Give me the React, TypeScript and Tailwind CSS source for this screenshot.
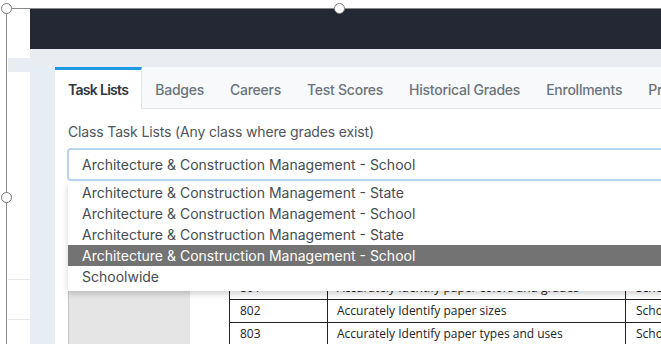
const tabs = ["Badges", "Careers", "Test Scores", "Historical Grades", "Enrollments", "Progress"];

const options = [
  "Architecture & Construction Management - State",
  "Architecture & Construction Management - School",
  "Architecture & Construction Management - State",
  "Architecture & Construction Management - School",
  "Schoolwide",
];

const rows = [
  { code: "800", name: "Accurately Identify paper weights", scope: "School" },
  { code: "801", name: "Accurately Identify paper finishes", scope: "School" },
  { code: "801", name: "Accurately Identify paper colors and grades", scope: "School" },
  { code: "802", name: "Accurately Identify paper sizes", scope: "School" },
  { code: "803", name: "Accurately Identify paper types and uses", scope: "School" },
];

function Handle({ className }: { className: string }) {
  return (
    <div
      className={`absolute w-[11px] h-[11px] rounded-full border border-[#7a7a7a] bg-white ${className}`}
    />
  );
}

export default function App() {
  return (
    <div
      className="relative w-[661px] h-[344px] overflow-hidden bg-white flex pt-[8px] pl-[8px]"
      style={{ fontFamily: "Inter, 'Noto Sans', sans-serif" }}
    >
      {/* left strip of the page behind */}
      <div className="w-[22px] flex flex-col shrink-0">
        <div className="h-[50px] bg-white" />
        <div className="h-[14px] bg-[#e9ecf1]" />
        <div className="h-[208px] bg-white border-b border-[#e3e6ea]" />
        <div className="h-[40px] bg-white border-b border-[#e3e6ea]" />
        <div className="flex-1 bg-white" />
      </div>

      <div className="flex-1 flex flex-col min-w-0">
        <div className="h-[41px] bg-[#232834] shrink-0" />
        <div className="flex-1 flex bg-[#e9ecf1] pt-[18px]">
          <div className="w-[25px] bg-[#e7edf5] shrink-0" />
          <div className="flex-1 bg-white flex flex-col min-w-0">
            {/* tabs */}
            <div className="h-[42px] flex items-stretch bg-[#f8f9fa] border-b border-[#e2e5e9] shrink-0">
              <div className="bg-white border-t-[3px] border-[#1d9be6] border-r border-r-[#e2e5e9] px-[13px] flex items-center text-[14px] font-semibold tracking-[-0.7px] text-[#2f353c] whitespace-nowrap -mb-px">
                Task Lists
              </div>
              {tabs.map((t) => (
                <div
                  key={t}
                  className="px-[13px] flex items-center pt-[3px] text-[14px] font-medium tracking-[-0.25px] text-[#6b737c] whitespace-nowrap"
                >
                  {t}
                </div>
              ))}
            </div>

            {/* body */}
            <div className="relative pl-[13px] pt-[12px]">
              <div className="h-[20px] flex items-center text-[14px] tracking-[-0.15px] text-[#50555b] whitespace-nowrap">
                Class Task Lists (Any class where grades exist)
              </div>
              <div className="mt-[7px] -ml-px w-[640px] h-[33px] border-2 border-[#b9d4f0] rounded-[4px] flex items-center pl-[13px] text-[14px] text-[#474c52] whitespace-nowrap">
                Architecture &amp; Construction Management - School
              </div>

              <div className="mt-[49px] flex items-start w-[700px]">
                <div className="w-[122px] h-[150px] bg-[#e5e5e5] border-l border-[#c4c4c4] shrink-0" />
                <table
                  className="ml-[39px] shrink-0 table-fixed w-[498px] border-collapse text-[12px] text-[#222]"
                  style={{ fontFamily: "'Open Sans', sans-serif" }}
                >
                  <colgroup>
                    <col className="w-[98px]" />
                    <col className="w-[298px]" />
                    <col className="w-[102px]" />
                  </colgroup>
                  <tbody>
                    {rows.map((r, i) => (
                      <tr key={i}>
                        <td className="h-[23px] py-0 leading-[20px] border-[1.5px] border-[#222] px-[10px]">{r.code}</td>
                        <td className="h-[23px] py-0 leading-[20px] border-[1.5px] border-[#222] px-[9px] whitespace-nowrap">{r.name}</td>
                        <td className="h-[23px] py-0 leading-[20px] border-[1.5px] border-[#222] px-[10px]">{r.scope}</td>
                      </tr>
                    ))}
                  </tbody>
                </table>
              </div>

              {/* open dropdown */}
              <div className="absolute top-[73px] left-[13px] w-[640px] bg-white shadow-[0_3px_6px_rgba(0,0,0,0.18)] pb-[4px]">
                {options.map((o, i) => (
                  <div
                    key={i}
                    className={`h-[21px] flex items-center pl-[14px] text-[14px] whitespace-nowrap ${
                      i === 3 ? "bg-[#737373] text-white" : "text-[#474c52]"
                    }`}
                  >
                    {o}
                  </div>
                ))}
              </div>
            </div>
          </div>
        </div>
      </div>

      {/* selection frame and handles */}
      <div className="absolute left-[6px] top-[8px] bottom-0 w-px bg-[#8a8a8a]" />
      <div className="absolute left-[6px] top-[8px] right-0 h-px bg-[#8a8a8a]" />
      <Handle className="left-[1px] top-[3px]" />
      <Handle className="left-[334px] top-[3px]" />
      <Handle className="left-[1px] top-[192px]" />
    </div>
  );
}
